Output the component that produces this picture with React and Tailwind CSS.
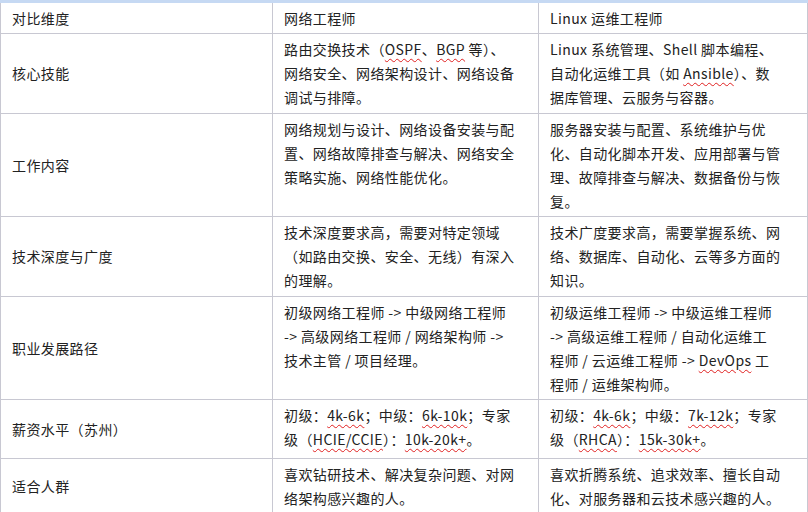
import React from 'react';

const Sq = ({ children }) => (
  <span className="underline decoration-wavy decoration-[#e02020] decoration-1 underline-offset-[3px]">{children}</span>
);

const L = ({ lines }) => (
  <>
    {lines.map((l, i) => (
      <div key={i} className="whitespace-nowrap">{l}</div>
    ))}
  </>
);

const rows = [
  {
    h: 'h-[80px]',
    a: '核心技能',
    b: [<>路由交换技术（<Sq>OSPF</Sq>、<Sq>BGP</Sq> 等）、</>, '网络安全、网络架构设计、网络设备', '调试与排障。'],
    c: ['Linux 系统管理、Shell 脚本编程、', <>自动化运维工具（如 <Sq>Ansible</Sq>）、数</>, '据库管理、云服务与容器。'],
  },
  {
    h: 'h-[103px]',
    a: '工作内容',
    b: ['网络规划与设计、网络设备安装与配', '置、网络故障排查与解决、网络安全', '策略实施、网络性能优化。'],
    c: ['服务器安装与配置、系统维护与优', '化、自动化脚本开发、应用部署与管', '理、故障排查与解决、数据备份与恢', '复。'],
  },
  {
    h: 'h-[80px]',
    a: '技术深度与广度',
    b: ['技术深度要求高，需要对特定领域', '（如路由交换、安全、无线）有深入', '的理解。'],
    c: ['技术广度要求高，需要掌握系统、网', '络、数据库、自动化、云等多方面的', '知识。'],
  },
  {
    h: 'h-[102px]',
    a: '职业发展路径',
    b: ['初级网络工程师 -> 中级网络工程师', '-> 高级网络工程师 / 网络架构师 ->', '技术主管 / 项目经理。'],
    c: ['初级运维工程师 -> 中级运维工程师', '-> 高级运维工程师 / 自动化运维工', <>程师 / 云运维工程师 -&gt; <Sq>DevOps</Sq> 工</>, '程师 / 运维架构师。'],
  },
  {
    h: 'h-[59px]',
    a: '薪资水平（苏州）',
    b: [<>初级：<Sq>4k-6k</Sq>；中级：<Sq>6k-10k</Sq>；专家</>, <>级（<Sq>HCIE/CCIE</Sq>）：<Sq>10k-20k+</Sq>。</>],
    c: [<>初级：<Sq>4k-6k</Sq>；中级：<Sq>7k-12k</Sq>；专家</>, <>级（<Sq>RHCA</Sq>）：<Sq>15k-30k+</Sq>。</>],
  },
  {
    h: 'h-[53px]',
    a: '适合人群',
    b: ['喜欢钻研技术、解决复杂问题、对网', '络架构感兴趣的人。'],
    c: ['喜欢折腾系统、追求效率、擅长自动', '化、对服务器和云技术感兴趣的人。'],
  },
];

export default function App() {
  return (
    <div
      className="w-[808px] h-[512px] bg-white text-[14px] leading-[24px] text-[#222] tracking-[0.4px]"
      style={{ fontFamily: '"Noto Sans CJK SC", "Noto Sans", sans-serif' }}
    >
      <div className="border-t-[3px] border-[#c6d9f3]">
        <table className="w-[807px] border-collapse table-fixed">
          <colgroup>
            <col className="w-[272px]" />
            <col className="w-[266px]" />
            <col className="w-[269px]" />
          </colgroup>
          <thead>
            <tr className="h-[30px]">
              <th className="border border-t-0 border-[#c8c8d2] px-[11px] text-left font-normal">对比维度</th>
              <th className="border border-t-0 border-[#c8c8d2] px-[11px] text-left font-normal">网络工程师</th>
              <th className="border border-t-0 border-[#c8c8d2] px-[11px] text-left font-normal">Linux 运维工程师</th>
            </tr>
          </thead>
          <tbody>
            {rows.map((r, i) => (
              <tr key={i} className={r.h}>
                <td className="border border-[#c8c8d2] px-[11px] align-middle">{r.a}</td>
                <td className="border border-[#c8c8d2] px-[11px] py-[3px] align-top overflow-hidden"><L lines={r.b} /></td>
                <td className="border border-[#c8c8d2] px-[11px] py-[3px] align-top overflow-hidden"><L lines={r.c} /></td>
              </tr>
            ))}
          </tbody>
        </table>
      </div>
    </div>
  );
}
